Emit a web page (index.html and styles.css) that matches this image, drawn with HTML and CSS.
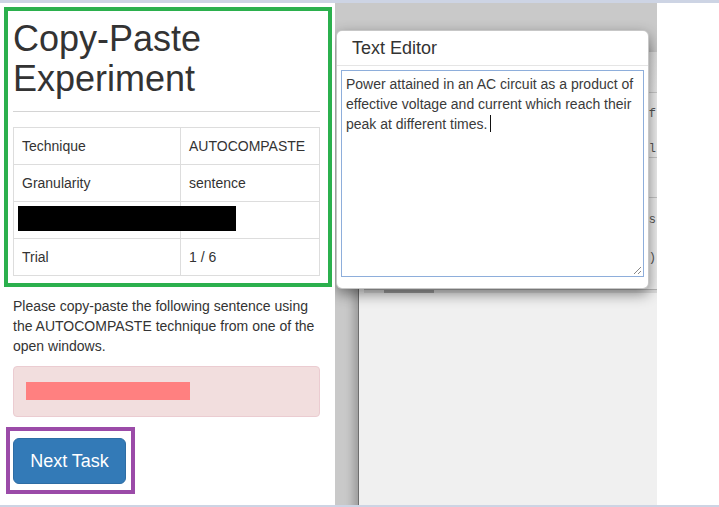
FILE: index.html
```html
<!DOCTYPE html>
<html lang="en">
<head>
<meta charset="utf-8">
<title>Copy-Paste Experiment</title>
<link rel="stylesheet" href="styles.css">
</head>
<body>
<div class="screen">
  <aside class="panel">
    <section class="task-box">
      <h1 class="title">Copy-Paste Experiment</h1>
      <hr class="rule">
      <table class="info">
        <colgroup><col class="col-key"><col></colgroup>
        <tr><td>Technique</td><td>AUTOCOMPASTE</td></tr>
        <tr><td>Granularity</td><td>sentence</td></tr>
        <tr><td class="redacted-cell"><span class="redact-black"></span></td><td></td></tr>
        <tr><td>Trial</td><td>1 / 6</td></tr>
      </table>
    </section>
    <p class="instructions">Please copy-paste the following sentence using the AUTOCOMPASTE technique from one of the open windows.</p>
    <div class="alert"><span class="redact-pink"></span></div>
    <div class="next-box"><button class="btn" type="button">Next Task</button></div>
  </aside>

  <main class="desktop">
    <div class="bg-window">
      <div class="bw-head"></div>
      <div class="bw-panel">
        <div class="bw-line l1">f</div>
        <div class="bw-line l2">pl</div>
        <div class="bw-sep s1"></div>
        <div class="bw-sep s2"></div>
        <div class="bw-line l3">s</div>
        <div class="bw-line l4">)</div>
      </div>
      <div class="bw-tabbar"><span class="bw-tab"></span></div>
    </div>

    <div class="editor">
      <div class="editor-head">Text Editor</div>
      <div class="editor-body">
        <div class="editor-area">Power attained in an AC circuit as a product of effective voltage and current which reach their peak at different times. <span class="caret"></span>
          <svg class="grip" width="10" height="10" viewBox="0 0 10 10"><path d="M9 2 L2 9 M9 6 L6 9" stroke="#888" stroke-width="1" fill="none"/></svg>
        </div>
      </div>
    </div>
  </main>

  <div class="outside"></div>
</div>
</body>
</html>
```

FILE: styles.css
```css
html, body {
  margin: 0;
  padding: 0;
}

body {
  background: #cdd4e4;
  padding-top: 3px;
  height: 502px;
  overflow: hidden;
  font-family: "Liberation Sans", Arial, sans-serif;
  color: #333;
}

.screen {
  display: flex;
  height: 502px;
}

/* ---------- left panel ---------- */
.panel {
  flex: none;
  width: 335px;
  background: #fff;
  display: flex;
  flex-direction: column;
  align-items: flex-start;
}

.task-box {
  box-sizing: border-box;
  width: 328px;
  margin: 4px 0 0 4px;
  border: 4px solid #2bb04d;
  padding: 0 8px 7px 5px;
}

.title {
  margin: 8px 0 0;
  font-size: 36px;
  line-height: 1.1;
  font-weight: 400;
  color: #333;
}

.rule {
  margin: 13px 0 15px;
  border: 0;
  border-top: 1px solid #d4d4d4;
  height: 0;
}

.info {
  width: 100%;
  border-collapse: collapse;
  table-layout: fixed;
  font-size: 14px;
}

.col-key {
  width: 167px;
}

.info td {
  border: 1px solid #dddddd;
  padding: 8px;
  line-height: 20px;
  height: 20px;
  color: #333;
}

.redacted-cell {
  position: relative;
}

.redact-black {
  position: absolute;
  left: 4px;
  top: 4px;
  width: 218px;
  height: 25px;
  background: #000;
  z-index: 1;
}

.instructions {
  box-sizing: border-box;
  width: 307px;
  margin: 9px 0 0 13px;
  font-size: 14px;
  line-height: 20px;
  color: #333;
}

.alert {
  box-sizing: border-box;
  width: 307px;
  margin: 10px 0 0 13px;
  padding: 15px 12px 16px;
  background: #f2dede;
  border: 1px solid #ebccd1;
  border-radius: 4px;
}

.redact-pink {
  display: block;
  width: 164px;
  height: 18px;
  background: #ff8080;
}

.next-box {
  margin: 10px 0 0 6px;
  border: 4px solid #9b4ba8;
  padding: 7px 5px 6px 3px;
}

.btn {
  display: block;
  box-sizing: border-box;
  width: 113px;
  height: 46px;
  padding: 10px 16px;
  font-family: "Liberation Sans", Arial, sans-serif;
  font-size: 18px;
  line-height: 24px;
  color: #fff;
  background: #337ab7;
  border: 1px solid #2e6da4;
  border-radius: 6px;
}

/* ---------- desktop ---------- */
.desktop {
  flex: none;
  width: 322px;
  position: relative;
  overflow: hidden;
  background: #c9c9c9;
  height: 502px;
}

.bg-window {
  position: absolute;
  left: 23px;
  top: 49px;
  right: 0;
  bottom: -20px;
  background: #f0f0f0;
  border-left: 1px solid #6e6e6e;
  box-shadow: -5px 0 8px rgba(0, 0, 0, 0.22);
}

.bw-head {
  height: 40px;
  background: linear-gradient(#dcdcdc, #e6e6e6);
  border-bottom: 1px solid #c6c6c6;
}

.bw-panel {
  position: relative;
  margin-left: 5px;
  height: 196px;
  background: #ececec;
  border-bottom: 1px solid #b4b4b4;
}

.bw-line {
  position: absolute;
  right: 1px;
  font-family: "Liberation Mono", monospace;
  font-size: 12px;
  line-height: 14px;
  color: #555;
  white-space: nowrap;
}

.l1 { top: 14px; }
.l2 { top: 49px; }
.l3 { top: 120px; }
.l4 { top: 158px; }

.bw-sep {
  position: absolute;
  left: 0;
  right: 0;
  height: 0;
  border-top: 1px solid #c4c4c4;
}

.s1 { top: 64px; }
.s2 { top: 104px; }

.bw-tabbar {
  height: 3px;
  margin-left: 5px;
  background: #d9d9d9;
}

.bw-tab {
  display: block;
  margin-left: 20px;
  width: 50px;
  height: 3px;
  background: #9c9c9c;
}

.editor {
  position: absolute;
  left: 1px;
  top: 27px;
  width: 313px;
  box-sizing: border-box;
  background: #fff;
  border: 1px solid rgba(0, 0, 0, 0.22);
  border-radius: 6px;
  box-shadow: 0 5px 14px rgba(0, 0, 0, 0.45);
  z-index: 2;
}

.editor-head {
  padding: 7px 15px;
  font-size: 18px;
  line-height: 20px;
  color: #333;
  border-bottom: 1px solid #e5e5e5;
}

.editor-body {
  padding: 4px 4px 11px;
}

.editor-area {
  position: relative;
  box-sizing: border-box;
  height: 207px;
  padding: 3px 4px;
  border: 1px solid #8eaedb;
  font-size: 14px;
  line-height: 20px;
  color: #3a3a3a;
  background: #fff;
}

.caret {
  display: inline-block;
  width: 0;
  height: 17px;
  border-left: 1px solid #111;
  vertical-align: -3px;
  margin-left: -1px;
}

.grip {
  position: absolute;
  right: 1px;
  bottom: 1px;
}

.outside {
  flex: 1;
  background: #fff;
  height: 502px;
}
```
